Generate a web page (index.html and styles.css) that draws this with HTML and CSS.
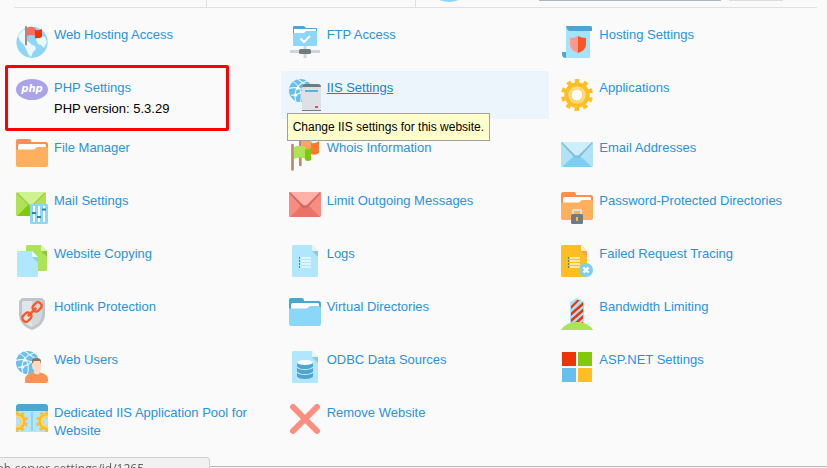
FILE: index.html
```
<!DOCTYPE html>
<html lang="en">

<head>
    <meta charset="utf-8">
    <meta name="viewport" content="width=device-width, initial-scale=1.0">
    <title>Website settings</title>
    <link rel="stylesheet" href="styles.css">
</head>

<body>
    <!-- shared icon parts -->
    <svg class="sprite" width="0" height="0" aria-hidden="true">
        <symbol id="globe" viewBox="0 0 24 24">
            <circle cx="12" cy="12" r="12" fill="#67bfea" />
            <path d="M4 3Q9 5 11 10Q14 17 12 24M19 2Q11 4 8 10Q5 16 7 23M0 10Q5 8 11 10Q17 11 22 16M2 17Q8 17 14 13Q19 9 22 7M9 0L20 8" fill="none" stroke="#eef7fc" stroke-width="1.1" />
            <circle cx="9" cy="9.5" r="1.8" fill="#fff" />
            <circle cx="7" cy="17" r="1.5" fill="#fff" />
        </symbol>
        <symbol id="gear" viewBox="0 0 32 32">
            <circle cx="16" cy="16" r="14" fill="none" stroke="#ffbe21" stroke-width="4" stroke-dasharray="4.4 4.396" transform="rotate(-99 16 16)" />
            <circle cx="16" cy="16" r="9" fill="none" stroke="#ffbe21" stroke-width="7.5" />
            <circle cx="16" cy="16" r="7.3" fill="none" stroke="#ffdb80" stroke-width="3" />
        </symbol>
        <symbol id="lines" viewBox="0 0 12 11">
            <path d="M0 1h1M0 4h1M0 7h1M0 10h1" stroke="#5a8193" stroke-width="2" />
            <path d="M2 1h10M2 4h10M2 7h10M2 10h10" stroke="#fff" stroke-opacity=".6" stroke-width="2" />
        </symbol>
    </svg>

    <header class="toolbar">
        <div class="toolbar-cell"></div>
        <div class="toolbar-cell"></div>
        <div class="toolbar-cell">
            <svg class="toolbar-globe" viewBox="0 0 48 48" aria-hidden="true"><circle cx="24" cy="24" r="24" fill="#8cd6f7" /></svg>
            <input class="toolbar-input" type="text" aria-label="Search">
            <button class="toolbar-button" type="button" aria-label="Go"></button>
        </div>
    </header>

    <main class="tools">
        <div class="tool">
            <svg class="icon" viewBox="0 0 32 32">
                <circle cx="16" cy="16.3" r="15.6" fill="#8cd6f7" />
                <path d="M2 10L4 7L9 4V14L13 16L16 19L19 20L20 23L17 26L15 31L12 28L10 23L8 19L4 15ZM21 11L25 10L29 11L31 16L28 22L25 19L22 18L20 14ZM5 6L8 3L9 5L6 8Z" fill="#edf8fe" />
                <path d="M11 2Q16 -1 20 3V10Q15 8 11 10Z" fill="#ff6b60" />
                <path d="M19 4Q22 5 26 3V11Q23 13 19 12Z" fill="#ee3506" />
                <path d="M10 1V18.500" stroke="#b5876d" stroke-width="2" stroke-linecap="round" />
            </svg>
            <a href="#" class="tool-link">Web Hosting Access</a>
        </div>
        <div class="tool">
            <svg class="icon" viewBox="0 0 32 32">
                <path d="M4 1Q4 0 5 0H15L17 2H28V9H4Z" fill="#4ea5d0" />
                <path d="M5 3H27V8H5Z" fill="#fff" />
                <path d="M4 7H15L17 5H28V19Q28 20 27 20H5Q4 20 4 19Z" fill="#8cd6f7" />
                <path d="M11.500 12.500L15 16L21 10" fill="none" stroke="#fff" stroke-width="2" />
                <path d="M1 25.500H31M16 20V32" stroke="#cfd6da" stroke-width="3" />
                <rect x="10" y="23" width="12" height="5" rx="1.500" fill="#6f7c83" />
            </svg>
            <a href="#" class="tool-link">FTP Access</a>
        </div>
        <div class="tool">
            <svg class="icon" viewBox="0 0 32 32">
                <path d="M5 0H29V32H5Z" fill="#a3e3fc" />
                <path d="M5 0H30Q31 0 31 2V5H9Q6 5 5 0Z" fill="#4ea5d0" />
                <path d="M1 26H5V32Q1 32 1 28Z" fill="#4ea5d0" />
                <path d="M17 10V27Q9 24 9 19V12Q14 12 17 10Z" fill="#ff998f" />
                <path d="M17 10V27Q25 24 25 19V12Q20 12 17 10Z" fill="#fb5524" />
            </svg>
            <a href="#" class="tool-link">Hosting Settings</a>
        </div>

        <div class="tool">
            <svg class="icon" viewBox="0 0 32 32">
                <ellipse cx="16" cy="10.500" rx="16" ry="10.500" fill="#aba3e8" />
                <text class="php-label" x="16" y="13" text-anchor="middle">php</text>
            </svg>
            <div>
                <a href="#" class="tool-link">PHP Settings</a>
                <p class="tool-info">PHP version: 5.3.29</p>
            </div>
            <div class="marker"></div>
        </div>
        <div class="tool tool-active">
            <svg class="icon" viewBox="0 0 32 32">
                <use href="#globe" width="23" height="23" />
                <path d="M13 8Q13 5 16 5H29Q32 5 32 8V32H13Z" fill="#dde1e5" />
                <path d="M13 8Q13 5 16 5H29Q32 5 32 8Z" fill="#6f7c83" />
                <path d="M13 31.500H32" stroke="#6f7c83" />
                <path d="M16 12H29" stroke="#55b4e0" stroke-width="2" />
                <path d="M26 28H29" stroke="#f4483a" stroke-width="2" />
            </svg>
            <a href="#" class="tool-link" aria-describedby="iis-tip">IIS Settings</a>
            <div class="tooltip" id="iis-tip" role="tooltip">Change IIS settings for this website.</div>
        </div>
        <div class="tool">
            <svg class="icon" viewBox="0 0 32 32"><use href="#gear" width="32" height="32" /><circle cx="16" cy="16" r="5.400" fill="#fff" /></svg>
            <a href="#" class="tool-link">Applications</a>
        </div>

        <div class="tool">
            <svg class="icon" viewBox="0 0 32 28">
                <path d="M0 2Q0 0 2 0H13Q15 0 15 3H30Q32 3 32 6V14H0Z" fill="#fc8f50" />
                <path d="M2 7Q2 5 4 5H29Q30 5 30 7V12H2Z" fill="#fff" />
                <path d="M0 10.500H17Q19 10.500 19.500 9Q20 8 22 8H30Q32 8 32 10V26Q32 28 30 28H2Q0 28 0 26Z" fill="#ffb05c" />
            </svg>
            <a href="#" class="tool-link">File Manager</a>
        </div>
        <div class="tool">
            <svg class="icon" viewBox="0 0 32 32">
                <path d="M11.300 1V26" stroke="#b5876d" stroke-width="2.600" stroke-linecap="round" />
                <path d="M12.500 2Q18 -1 23 3V13Q18 10 12.500 13Z" fill="#ffa366" />
                <path d="M22 4Q26 5 30 2V14Q26 17 22 15Z" fill="#ff7a2e" />
                <path d="M3.500 6V30.500" stroke="#b5876d" stroke-width="2.600" stroke-linecap="round" />
                <path d="M5 8Q11 5 17 9V20Q11 17 5 20Z" fill="#aee356" />
                <path d="M16 10Q19 11 22 9V21Q19 23 16 21Z" fill="#82c90e" />
            </svg>
            <a href="#" class="tool-link">Whois Information</a>
        </div>
        <div class="tool">
            <svg class="icon" viewBox="0 0 32 32">
                <rect y="3" width="32" height="25" rx="1.500" fill="#b0e3f7" />
                <path d="M1 28L14 16H18L31 28Z" fill="#7bcff0" />
                <path d="M0 4L12 17Q16 21 20 17L32 4L31 3H1Z" fill="#86bdd3" />
                <path d="M1 3L13 15Q16 18 19 15L31 3Z" fill="#cdeffd" />
            </svg>
            <a href="#" class="tool-link">Email Addresses</a>
        </div>

        <div class="tool">
            <svg class="icon" viewBox="0 0 32 32">
                <rect width="30" height="24" rx="1.500" fill="#aee356" />
                <path d="M1 24L13 12H17L29 24Z" fill="#82c90e" />
                <path d="M0 1L13 14Q15 16 17 14L30 1Z" fill="#9bcb4c" />
                <path d="M1 0L13 12Q15 14 17 12L29 0Z" fill="#cff291" />
                <rect x="14" y="12" width="18" height="20" rx="1.500" fill="#8cd6f7" />
                <path d="M18 14V30M23 14V30M28 14V30" stroke="#fff" stroke-width="2" />
                <path d="M16 21H20M21 25H25M26 17.500H30" stroke="#2a80ab" stroke-width="2" />
            </svg>
            <a href="#" class="tool-link">Mail Settings</a>
        </div>
        <div class="tool">
            <svg class="icon" viewBox="0 0 32 25">
                <rect width="32" height="25" rx="1.500" fill="#f98c80" />
                <path d="M1 25L13 13H19L31 25Z" fill="#e97269" />
                <path d="M0 1L12 14Q16 18 20 14L32 1L31 0H1Z" fill="#cf675f" />
                <path d="M1 0L13 12Q16 15 19 12L31 0Z" fill="#ffb1a9" />
            </svg>
            <a href="#" class="tool-link">Limit Outgoing Messages</a>
        </div>
        <div class="tool">
            <svg class="icon" viewBox="0 0 32 32">
                <path d="M0 2Q0 0 2 0H13Q15 0 15 3H30Q32 3 32 6V14H0Z" fill="#fc8f50" />
                <path d="M2 7Q2 5 4 5H29Q30 5 30 7V12H2Z" fill="#fff" />
                <path d="M0 10.500H17Q19 10.500 19.500 9Q20 8 22 8H30Q32 8 32 10V26Q32 28 30 28H2Q0 28 0 26Z" fill="#ffb05c" />
                <path d="M12 23V19Q12 18 13 18H19Q20 18 20 19V23" fill="none" stroke="#dde1e5" stroke-width="2" />
                <rect x="10" y="22" width="12" height="10" rx="1.500" fill="#6f7c83" />
                <path d="M16 25V29" stroke="#ffb05c" stroke-width="2" />
            </svg>
            <a href="#" class="tool-link">Password-Protected Directories</a>
        </div>

        <div class="tool">
            <svg class="icon" viewBox="0 0 32 32">
                <path d="M10 1.500Q10 0 11.500 0H25L31 6V24.500Q31 26 29.500 26H11.500Q10 26 10 24.500Z" fill="#aee356" />
                <path d="M25 6H31V12Z" fill="#8fc545" />
                <path d="M25 0L31 6H25Z" fill="#d8f5a4" />
                <path d="M1 7.500Q1 6 2.500 6H16L22 12V30.500Q22 32 20.500 32H2.500Q1 32 1 30.500Z" fill="#b0e7ff" />
                <path d="M16 12H22V18Z" fill="#94cfe8" />
                <path d="M16 6L22 12H16Z" fill="#e6f8ff" />
            </svg>
            <a href="#" class="tool-link">Website Copying</a>
        </div>
        <div class="tool">
            <svg class="icon" viewBox="0 0 32 32">
                <path d="M3 1.500Q3 0 4.500 0H23L29 6V30.500Q29 32 27.500 32H4.500Q3 32 3 30.500Z" fill="#b0e7ff" />
                <path d="M23 6H29V12Z" fill="#94c5da" />
                <path d="M23 0L29 6H23Z" fill="#e2f6ff" />
                <use href="#lines" x="10" y="12" width="12" height="11" />
            </svg>
            <a href="#" class="tool-link">Logs</a>
        </div>
        <div class="tool">
            <svg class="icon" viewBox="0 0 32 32">
                <path d="M0 1.500Q0 0 1.500 0H20L26 6V30.500Q26 32 24.500 32H1.500Q0 32 0 30.500Z" fill="#ffbe21" />
                <path d="M20 6H26V12Z" fill="#f9a057" />
                <path d="M20 0L26 6H20Z" fill="#fff1cc" />
                <use href="#lines" x="7" y="12" width="12" height="11" />
                <circle cx="25" cy="25" r="7" fill="#7fd0f0" />
                <path d="M22.500 22.500L27.500 27.500M27.500 22.500L22.500 27.500" stroke="#fff" stroke-width="2.400" />
            </svg>
            <a href="#" class="tool-link">Failed Request Tracing</a>
        </div>

        <div class="tool">
            <svg class="icon" viewBox="0 0 32 32">
                <path d="M6 0H26L29 3V16Q29 27 16 32Q3 27 3 16V3Z" fill="#bfc5ca" />
                <path d="M7 3H16V29Q6 25 6 16V4Z" fill="#e0e5e8" />
                <path d="M16 3H25L26 4V16Q26 25 16 29Z" fill="#d2d8dc" />
                <g transform="rotate(-45 16 14)" fill="none" stroke="#fb5a28" stroke-width="2.400">
                    <rect x="4" y="10.500" width="9.500" height="7" rx="3" />
                    <rect x="18.500" y="10.500" width="9.500" height="7" rx="3" />
                    <path d="M11 14H21" stroke-linecap="round" />
                </g>
            </svg>
            <a href="#" class="tool-link">Hotlink Protection</a>
        </div>
        <div class="tool">
            <svg class="icon" viewBox="0 0 32 28">
                <path d="M0 2Q0 0 2 0H13Q15 0 15 3H30Q32 3 32 6V14H0Z" fill="#4ea5d0" />
                <path d="M2 7Q2 5 4 5H29Q30 5 30 7V12H2Z" fill="#fff" />
                <path d="M0 10.500H17Q19 10.500 19.500 9Q20 8 22 8H30Q32 8 32 10V26Q32 28 30 28H2Q0 28 0 26Z" fill="#8cd6f7" />
            </svg>
            <a href="#" class="tool-link">Virtual Directories</a>
        </div>
        <div class="tool">
            <svg class="icon" viewBox="0 0 32 32">
                <path d="M9 4L16 0L23 4V26H9Z" fill="#a3e3fc" />
                <path d="M10 8L16 2L19 2L10 11ZM10 14.500L22 4V7.500L10 18ZM10 21L22 10.500V14L10 24.500ZM13 25L22 17V20.500L17 25ZM20 25L22 23.500V25Z" fill="#ee3506" />
                <path d="M0 32Q5 24 16 24T32 32Z" fill="#aee356" />
            </svg>
            <a href="#" class="tool-link">Bandwidth Limiting</a>
        </div>

        <div class="tool">
            <svg class="icon" viewBox="0 0 32 32">
                <use href="#globe" width="23" height="23" />
                <path d="M9 32V28Q9 23 17 21.500H24Q32 23 32 28V30Q32 32 30 32Z" fill="#ff9152" />
                <path d="M16 9H25V16Q25 19 24 20V22Q20.500 25 18 22V19Q16 18 16 15Z" fill="#ffd9c2" />
                <path d="M16 13V9Q17 7 20 7Q25 7 25 10V13L24 10H18Z" fill="#8c7360" />
            </svg>
            <a href="#" class="tool-link">Web Users</a>
        </div>
        <div class="tool">
            <svg class="icon" viewBox="0 0 32 32">
                <path d="M3 1.500Q3 0 4.500 0H23L29 6V30.500Q29 32 27.500 32H4.500Q3 32 3 30.500Z" fill="#b0e7ff" />
                <path d="M23 6H29V12Z" fill="#94c5da" />
                <path d="M23 0L29 6H23Z" fill="#e2f6ff" />
                <path d="M8 11.500V25.500Q10 28 16 28T24 25.500V11.500Z" fill="#4ea5d0" />
                <ellipse cx="16" cy="11.500" rx="8" ry="2.500" fill="#fff" />
                <path d="M8 16Q10 18.500 16 18.500T24 16M8 21Q10 23.500 16 23.500T24 21" fill="none" stroke="#c9effd" stroke-width="1.200" />
            </svg>
            <a href="#" class="tool-link">ODBC Data Sources</a>
        </div>
        <div class="tool">
            <svg class="icon" viewBox="0 0 32 32">
                <path d="M1 1H15V15H1Z" fill="#ee3506" />
                <path d="M17 1H31V15H17Z" fill="#82c90e" />
                <path d="M1 17H15V31H1Z" fill="#67bfea" />
                <path d="M17 17H31V31H17Z" fill="#ffbe21" />
            </svg>
            <a href="#" class="tool-link">ASP.NET Settings</a>
        </div>

        <div class="tool">
            <svg class="icon" viewBox="0 0 32 28">
                <path d="M0 7H32V28H0Z" fill="#b0e7ff" />
                <svg y="7" width="32" height="21" viewBox="0 7 32 21">
                    <use href="#gear" x="-10" y="6.500" width="22" height="22" />
                    <use href="#gear" x="20" y="6.500" width="22" height="22" />
                </svg>
                <path d="M0 7V3Q0 0 3 0H29Q32 0 32 3V7Z" fill="#4ea5d0" />
                <path d="M16 8V27" stroke="#7fd0f0" stroke-width="1.500" />
            </svg>
            <a href="#" class="tool-link">Dedicated IIS Application Pool for Website</a>
        </div>
        <div class="tool">
            <svg class="icon" viewBox="0 0 32 32">
                <path d="M4 3L28 27M28 3L4 27" stroke="#ff8e80" stroke-width="6" stroke-linecap="round" />
            </svg>
            <a href="#" class="tool-link">Remove Website</a>
        </div>
    </main>

    <div class="status">web-server-settings/id/1265</div>
</body>

</html>
```

FILE: styles.css
```
* {
    box-sizing: border-box;
}

body {
    display: flex;
    flex-direction: column;
    height: 100vh;
    margin: 0;
    overflow: hidden;
    background-color: #fafafa;
    color: #000;
    font-family: "Liberation Sans", Arial, sans-serif;
    font-size: 13px;
    line-height: 18px;
}

.sprite {
    position: absolute;
}

/* bottom edge of the toolbar */
.toolbar {
    display: grid;
    grid-template-columns: 193px 209px 1fr;
    flex: none;
    height: 8px;
    margin: 0 10px 0 14px;
    border-bottom: 1px solid #e0e0e0;
    overflow: hidden;
}

.toolbar-cell {
    display: flex;
    align-items: flex-end;
    height: 7px;
    padding-bottom: 6px;
    border-right: 1px solid #e0e0e0;
}

.toolbar-cell:last-child {
    border-right: none;
}

.toolbar-globe {
    flex: none;
    width: 48px;
    height: 48px;
    margin-left: 9px;
    margin-bottom: -1px;
}

.toolbar-input {
    width: 182px;
    height: 24px;
    margin: 0 8px 0 66px;
    border: 1px solid #abb5bd;
}

.toolbar-button {
    width: 54px;
    height: 24px;
    border: 1px solid #dcdcdc;
    background-color: #f5f5f5;
}

.tools {
    display: grid;
    grid-template-columns: repeat(3, 1fr);
    grid-gap: 5px 4px;
    flex: 1;
    align-content: start;
    align-items: start;
    margin-bottom: 1px;
    padding: 10px 5px 0 8px;
    border-bottom: 1px solid #b8b8b8;
}

.tool {
    position: relative;
    display: flex;
    align-items: flex-start;
    gap: 6px;
    min-height: 48px;
    padding: 8px;
}

.tool-active {
    background-color: #ebf5fb;
}

.icon {
    flex: none;
    width: 32px;
}

.php-label {
    fill: #fff;
    font-family: "DejaVu Sans", sans-serif;
    font-size: 10px;
    font-weight: bold;
    font-style: italic;
}

.tool-link {
    color: #2893de;
    text-decoration: none;
}

.tool-active .tool-link {
    color: #1c84cc;
    text-decoration: underline;
}

.tool-info {
    margin: 3px 0 0;
}

/* red frame around the PHP entry */
.marker {
    position: absolute;
    top: -6px;
    left: -3px;
    width: 224px;
    height: 66px;
    border: 3px solid #ff0000;
    border-radius: 2px;
}

.tooltip {
    position: absolute;
    top: 42px;
    left: 6px;
    z-index: 1;
    padding: 4px 5px;
    border: 1px solid #a0a0a0;
    background-color: #ffffcc;
    font-size: 12px;
    white-space: nowrap;
}

.status {
    position: fixed;
    left: 0;
    bottom: -11px;
    display: flex;
    justify-content: flex-end;
    width: 210px;
    height: 22px;
    padding-right: 65px;
    border: 1px solid #cfcfcf;
    border-left: none;
    border-top-right-radius: 4px;
    background-color: #f1f1f1;
    color: #5a5a5a;
    font-family: "Open Sans", sans-serif;
    font-size: 12px;
    line-height: 22px;
    white-space: nowrap;
    overflow: hidden;
}
```
